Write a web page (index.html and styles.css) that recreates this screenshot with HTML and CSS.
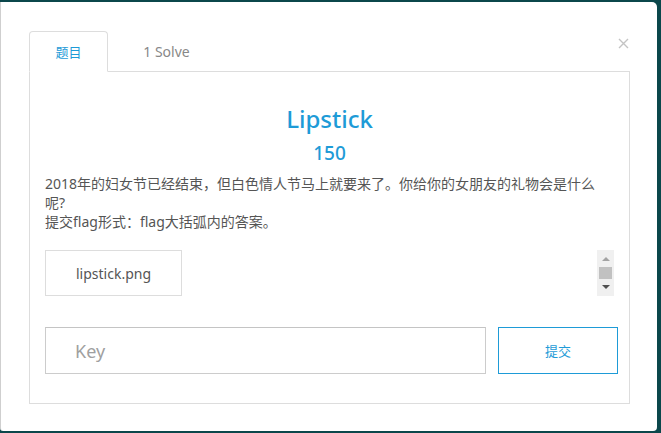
FILE: index.html
```html
<!DOCTYPE html>
<html lang="zh-CN">
<head>
<meta charset="utf-8">
<title>Lipstick</title>
<link rel="stylesheet" href="styles.css">
</head>
<body>
<div class="modal">
  <div class="tabs">
    <div class="tab tab-active">题目</div>
    <div class="tab tab-solves">1 Solve</div>
    <button class="close" aria-label="close">
      <svg width="11" height="11" viewBox="0 0 11 11"><path d="M1 1L10 10M10 1L1 10" stroke="#c4c4c4" stroke-width="1.4" fill="none"/></svg>
    </button>
  </div>
  <div class="panel">
    <h3 class="title">Lipstick</h3>
    <div class="value">150</div>
    <p class="desc">2018年的妇女节已经结束，但白色情人节马上就要来了。你给你的女朋友的礼物会是什么呢?<br>提交flag形式：flag大括弧内的答案。</p>
    <div class="files">
      <a class="file">lipstick.png</a>
      <div class="scrollbar">
        <span class="arrow-up"></span>
        <span class="thumb"></span>
        <span class="arrow-down"></span>
      </div>
    </div>
    <div class="submit-row">
      <input class="key" type="text" placeholder="Key">
      <div class="submit">提交</div>
    </div>
  </div>
</div>
</body>
</html>
```
FILE: styles.css
```css
html, body {
  margin: 0;
  padding: 0;
}
body {
  background: #0b474b;
  width: 661px;
  height: 433px;
  overflow: hidden;
  font-family: "Noto Sans", "Noto Sans CJK SC", sans-serif;
}
.modal {
  box-sizing: border-box;
  width: 657px;
  height: 429px;
  margin: 2px 4px 2px 0;
  background: #fff;
  border-left: 1px solid #cfcfcf;
  border-radius: 0 5px 4px 3px;
  padding: 29px 27px 27px 28px;
  display: flex;
  flex-direction: column;
}
.tabs {
  display: flex;
  align-items: stretch;
  height: 40px;
  border-bottom: 1px solid #dddddd;
}
.tab {
  display: flex;
  align-items: center;
  justify-content: center;
  box-sizing: border-box;
  height: 41px;
  margin-bottom: -1px;
  font-size: 13px;
}
.tab-active {
  width: 79px;
  border: 1px solid #dddddd;
  border-bottom-color: #fff;
  border-radius: 4px 4px 0 0;
  color: #1e9bd7;
  font-family: "Noto Sans CJK SC", sans-serif;
}
.tab-solves {
  width: 117px;
  color: #888;
  font-size: 14px;
}
.close {
  margin-left: auto;
  margin-right: 1px;
  margin-top: 7px;
  align-self: flex-start;
  width: 11px;
  height: 11px;
  padding: 0;
  border: 0;
  background: none;
  display: flex;
}
.panel {
  flex: 1;
  border: 1px solid #dddddd;
  border-top: 0;
  padding: 30px 15px 0 15px;
  display: flex;
  flex-direction: column;
}
.title {
  margin: 0;
  text-align: center;
  font-size: 24px;
  line-height: 34px;
  font-weight: 500;
  color: #1e9bd7;
}
.value {
  margin-top: 4px;
  text-align: center;
  font-size: 19px;
  line-height: 26px;
  font-weight: 500;
  color: #1e9bd7;
}
.desc {
  margin: 8px 0 0 0;
  width: 556px;
  font-family: "Noto Sans", "Noto Sans CJK SC", sans-serif;
  font-size: 14px;
  line-height: 19px;
  color: #555;
}
.files {
  margin-top: 19px;
  height: 46px;
  display: flex;
  justify-content: space-between;
}
.file {
  box-sizing: border-box;
  width: 137px;
  height: 46px;
  border: 1px solid #dddddd;
  display: flex;
  align-items: center;
  justify-content: center;
  font-size: 14px;
  color: #555;
}
.scrollbar {
  width: 17px;
  height: 46px;
  background: #f0f0f0;
  display: flex;
  flex-direction: column;
  align-items: center;
}
.arrow-up {
  margin-top: 7px;
  width: 0;
  height: 0;
  border-left: 4px solid transparent;
  border-right: 4px solid transparent;
  border-bottom: 4px solid #a3a3a3;
}
.thumb {
  margin-top: 6px;
  width: 13px;
  height: 12px;
  background: #c1c1c1;
}
.arrow-down {
  margin-top: 6px;
  width: 0;
  height: 0;
  border-left: 4px solid transparent;
  border-right: 4px solid transparent;
  border-top: 4px solid #505050;
}
.submit-row {
  margin: 31px -3px 0 0;
  display: flex;
  gap: 12px;
  height: 47px;
}
.key {
  flex: none;
  box-sizing: border-box;
  width: 441px;
  height: 47px;
  margin: 0;
  border: 1px solid #cccccc;
  border-top-color: #c4c4c4;
  padding: 0 29px;
  font-family: "Noto Sans", sans-serif;
  font-size: 18px;
  color: #555;
  outline: none;
}
.key::placeholder {
  color: #a0a0a0;
}
.submit {
  flex: none;
  box-sizing: border-box;
  width: 120px;
  height: 47px;
  border: 1px solid #1e9bd7;
  background: #fff;
  color: #1e9bd7;
  font-family: "Noto Sans CJK SC", sans-serif;
  font-size: 13px;
  display: flex;
  align-items: center;
  justify-content: center;
}
```
